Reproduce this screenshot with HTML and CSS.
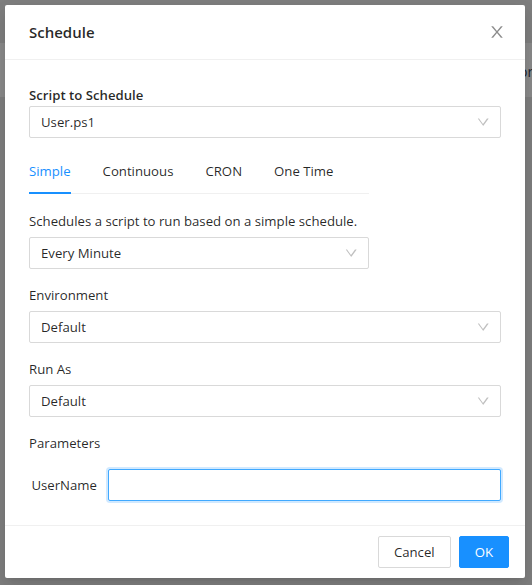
FILE: index.html
```html
<!DOCTYPE html>
<html lang="en">
<head>
<meta charset="utf-8">
<title>Schedule</title>
<link rel="stylesheet" href="styles.css">
</head>
<body>
<span class="bg-text">or</span>
<div class="modal">
  <div class="modal-header">
    <div class="modal-title">Schedule</div>
    <button class="modal-close" aria-label="Close">
      <svg viewBox="64 64 896 896" width="16" height="16" fill="currentColor"><path d="M563.8 512l262.5-312.9c4.4-5.2.7-13.1-6.1-13.1h-79.8c-4.7 0-9.2 2.1-12.3 5.7L511.6 449.8 295.1 191.7c-3-3.6-7.5-5.7-12.3-5.7H203c-6.8 0-10.5 7.900-6.1 13.1L459.4 512 196.9 824.9A7.950 7.950 0 00203 838h79.8c4.7 0 9.2-2.1 12.300-5.7l216.500-258.100 216.500 258.100c3 3.600 7.500 5.700 12.300 5.700h79.800c6.800 0 10.500-7.900 6.100-13.100L563.8 512z"/></svg>
    </button>
  </div>
  <div class="modal-body">
    <div class="field-label strong">Script to Schedule</div>
    <div class="select">
      <span class="select-value">User.ps1</span>
      <svg class="select-arrow" viewBox="64 64 896 896" width="12" height="12" fill="currentColor"><path d="M884 256h-75c-5.1 0-9.9 2.5-12.9 6.6L512 654.2 227.900 262.600c-3-4.100-7.800-6.600-12.900-6.600h-75c-6.500 0-10.300 7.400-6.500 11.400l370.200 510.100c12.800 17.600 39 17.600 51.700 0l370.200-510.100c3.900-4-.1-11.400-6.500-11.400z"/></svg>
    </div>

    <div class="tabs">
      <div class="tabs-nav">
        <div class="tab active">Simple</div>
        <div class="tab">Continuous</div>
        <div class="tab">CRON</div>
        <div class="tab">One Time</div>
      </div>
      <div class="tab-pane">
        <div class="desc">Schedules a script to run based on a simple schedule.</div>
        <div class="select">
          <span class="select-value">Every Minute</span>
          <svg class="select-arrow" viewBox="64 64 896 896" width="12" height="12" fill="currentColor"><path d="M884 256h-75c-5.1 0-9.9 2.5-12.9 6.6L512 654.2 227.900 262.600c-3-4.100-7.800-6.600-12.900-6.600h-75c-6.500 0-10.300 7.400-6.500 11.400l370.200 510.100c12.800 17.600 39 17.600 51.700 0l370.200-510.100c3.900-4-.1-11.400-6.500-11.400z"/></svg>
        </div>
      </div>
    </div>

    <div class="field-label">Environment</div>
    <div class="select">
      <span class="select-value">Default</span>
      <svg class="select-arrow" viewBox="64 64 896 896" width="12" height="12" fill="currentColor"><path d="M884 256h-75c-5.1 0-9.9 2.5-12.9 6.6L512 654.2 227.900 262.600c-3-4.100-7.800-6.600-12.900-6.600h-75c-6.500 0-10.300 7.400-6.500 11.400l370.200 510.100c12.800 17.600 39 17.600 51.700 0l370.200-510.100c3.900-4-.1-11.400-6.500-11.400z"/></svg>
    </div>

    <div class="field-label">Run As</div>
    <div class="select">
      <span class="select-value">Default</span>
      <svg class="select-arrow" viewBox="64 64 896 896" width="12" height="12" fill="currentColor"><path d="M884 256h-75c-5.1 0-9.9 2.5-12.9 6.6L512 654.2 227.900 262.600c-3-4.100-7.800-6.600-12.900-6.600h-75c-6.500 0-10.300 7.400-6.500 11.400l370.200 510.100c12.800 17.600 39 17.600 51.700 0l370.200-510.100c3.900-4-.1-11.400-6.500-11.400z"/></svg>
    </div>

    <div class="field-label">Parameters</div>
    <div class="param-row">
      <label class="param-label" for="username">UserName</label>
      <input class="input focused" id="username" type="text">
    </div>
  </div>
  <div class="modal-footer">
    <button class="btn">Cancel</button>
    <button class="btn btn-primary">OK</button>
  </div>
</div>
</body>
</html>
```
FILE: styles.css
```css
* { box-sizing: border-box; }

html, body { height: 100%; }

body {
  margin: 0;
  padding: 5px 7px 7px 5px;
  background: linear-gradient(to bottom, #7f7f7f 0, #7f7f7f 43px, #8b8b8b 43px, #8b8b8b 97px, #7f7f7f 97px);
  font-family: "Open Sans", "Noto Sans", sans-serif;
  font-size: 13.2px;
  color: rgba(0, 0, 0, 0.85);
  position: relative;
}

.bg-text {
  position: absolute;
  top: 61px;
  left: 519px;
  font-size: 14px;
  line-height: 22px;
  color: #1c2530;
}

.modal {
  position: relative;
  width: 520px;
  background: #fff;
  border-radius: 2px;
  box-shadow: 0 3px 6px -4px rgba(0,0,0,.12), 0 6px 16px 0 rgba(0,0,0,.08), 0 9px 28px 8px rgba(0,0,0,.05);
}

.modal-header {
  display: flex;
  align-items: center;
  justify-content: space-between;
  padding: 16px 20px 16px 24px;
  border-bottom: 1px solid #f0f0f0;
}

.modal-title {
  font-size: 15px;
  font-weight: 600;
  line-height: 22px;
  color: rgba(0, 0, 0, 0.85);
}

.modal-close {
  display: flex;
  align-items: center;
  justify-content: center;
  width: 16px;
  height: 22px;
  padding: 0;
  border: 0;
  background: transparent;
  color: rgba(0, 0, 0, 0.45);
}

.modal-body {
  padding: 24px;
}

.field-label {
  line-height: 22px;
  margin: 15px 0 5px;
}

.field-label.strong {
  font-weight: 600;
  margin: 0;
}

.select {
  display: flex;
  align-items: center;
  height: 32px;
  padding: 0 11px;
  border: 1px solid #d9d9d9;
  border-radius: 2px;
  background: #fff;
}

.select-value {
  flex: 1;
  line-height: 22px;
}

.select-arrow {
  color: rgba(0, 0, 0, 0.25);
}

.tabs {
  width: 340px;
  margin-top: 10px;
}

.tabs-nav {
  display: flex;
  box-shadow: inset 0 -1px 0 #f0f0f0;
  margin-bottom: 16px;
}

.tab {
  position: relative;
  padding: 12px 0;
  margin-right: 32px;
  line-height: 22px;
}

.tab.active {
  color: #1890ff;
}

.tab.active::after {
  content: "";
  position: absolute;
  left: 0;
  right: 0;
  bottom: 0;
  height: 2px;
  background: #1890ff;
}

.desc {
  line-height: 22px;
  margin-bottom: 5px;
}

.param-row {
  display: flex;
  align-items: center;
  margin-top: 15px;
}

.param-label {
  width: 79px;
  padding-right: 11px;
  text-align: right;
  line-height: 22px;
}

.input {
  flex: 1;
  height: 32px;
  padding: 4px 11px;
  border: 1px solid #d9d9d9;
  border-radius: 2px;
  font: inherit;
  outline: none;
}

.input.focused {
  border-color: #40a9ff;
  box-shadow: 0 0 0 2px rgba(24, 144, 255, 0.2);
}

.modal-footer {
  display: flex;
  justify-content: flex-end;
  gap: 8px;
  padding: 10px 16px;
  border-top: 1px solid #f0f0f0;
}

.btn {
  height: 32px;
  padding: 4px 15px;
  border: 1px solid #d9d9d9;
  border-radius: 2px;
  background: #fff;
  font: inherit;
  line-height: 22px;
  color: rgba(0, 0, 0, 0.85);
}

.btn-primary {
  background: #1890ff;
  border-color: #1890ff;
  color: #fff;
}
```
